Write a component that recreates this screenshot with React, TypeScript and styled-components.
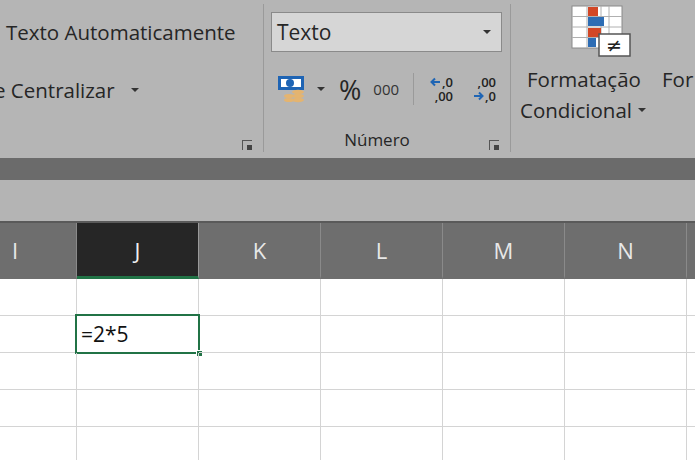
import styled, { createGlobalStyle } from "styled-components";

const Global = createGlobalStyle`
  body { margin: 0; background: #fff; overflow: hidden; }
  * { box-sizing: border-box; }
`;

const cols = ["I", "J", "K", "L", "M", "N", ""];
const widths = [77, 122, 122, 122, 122, 122, 122];

function BlueArrow({ dir }: { dir: "left" | "right" }) {
  return (
    <svg width="11" height="10" viewBox="0 0 11 10">
      {dir === "left" ? (
        <path d="M10 5H2M5 1.5L1.5 5L5 8.5" stroke="#1f65b4" strokeWidth="2" fill="none" />
      ) : (
        <path d="M1 5H9M6 1.5L9.5 5L6 8.5" stroke="#1f65b4" strokeWidth="2" fill="none" />
      )}
    </svg>
  );
}

export default function App() {
  return (
    <Page>
      <Global />
      <Ribbon>
        <AlignGroup>
          <RibbonText style={{ marginTop: 18 }}>Texto Automaticamente</RibbonText>
          <RibbonText style={{ marginTop: 30, marginLeft: -12 }}>
            e Centralizar <Caret style={{ marginLeft: 10 }} />
          </RibbonText>
          <Launcher style={{ left: 242 }} />
        </AlignGroup>
        <Sep />
        <NumberGroup>
          <Dropdown>
            Texto
            <Caret />
          </Dropdown>
          <IconRow>
            <IconBox>
              <svg width="30" height="30" viewBox="0 0 30 30">
                <rect x="1" y="2" width="26" height="14" fill="#1e64b4" />
                <rect x="4" y="5" width="20" height="8" fill="#fff" />
                <circle cx="13" cy="9" r="4" fill="#1e64b4" />
                <ellipse cx="21" cy="18" rx="6" ry="2.2" fill="#e4b470" />
                <ellipse cx="21" cy="22" rx="6" ry="2.2" fill="#e4b470" />
                <ellipse cx="21" cy="26" rx="6" ry="2.2" fill="#e4b470" />
                <ellipse cx="12" cy="22" rx="5" ry="2" fill="#e4b470" />
                <ellipse cx="12" cy="26" rx="5" ry="2" fill="#e4b470" />
              </svg>
            </IconBox>
            <Caret style={{ marginLeft: 10 }} />
            <Percent>%</Percent>
            <Thousands>000</Thousands>
            <VSep />
            <DecIcon>
              <span><BlueArrow dir="left" />,0</span>
              <span>,00</span>
            </DecIcon>
            <DecIcon>
              <span>,00</span>
              <span><BlueArrow dir="right" />,0</span>
            </DecIcon>
          </IconRow>
          <GroupLabel>Número</GroupLabel>
          <Launcher style={{ left: 225 }} />
        </NumberGroup>
        <Sep />
        <StyleGroup>
          <CondIcon>
            <svg width="62" height="56" viewBox="0 0 62 56">
              <rect x="1" y="1" width="50" height="42" fill="#fff" stroke="#8a8a8a" />
              {[11.5, 22, 32.5].map((y) => (
                <line key={y} x1="1" x2="51" y1={y} y2={y} stroke="#b0b0b0" />
              ))}
              {[16, 30, 38].map((x) => (
                <line key={x} x1={x} x2={x} y1="1" y2="43" stroke="#b0b0b0" />
              ))}
              <rect x="17" y="2" width="10" height="9" fill="#d24726" />
              <rect x="17" y="12" width="16" height="9" fill="#2e6db4" />
              <rect x="17" y="23" width="13" height="9" fill="#d24726" />
              <rect x="17" y="33" width="8" height="9" fill="#2e6db4" />
              <rect x="28" y="29" width="31" height="22" fill="#fff" stroke="#555" strokeWidth="1.5" />
              <text x="43" y="47" fontSize="19" textAnchor="middle" fontFamily="DejaVu Sans" fill="#222">≠</text>
            </svg>
          </CondIcon>
          <RibbonText style={{ marginTop: 4, marginLeft: 7 }}>Formatação</RibbonText>
          <RibbonText style={{ marginTop: 3 }}>
            Condicional <Caret style={{ marginLeft: 0 }} />
          </RibbonText>
          <CutText>For</CutText>
        </StyleGroup>
      </Ribbon>
      <DarkBar />
      <FormulaBar />
      <HeaderRow>
        {cols.map((c, i) => (
          <ColHead key={i} $w={widths[i]} $active={c === "J"}>
            {c}
          </ColHead>
        ))}
      </HeaderRow>
      {[0, 1, 2, 3, 4].map((r) => (
        <Row key={r}>
          {cols.map((c, i) => (
            <Cell key={i} $w={widths[i]}>
              {r === 1 && c === "J" && (
                <Selected>
                  =2*5
                  <Handle />
                </Selected>
              )}
            </Cell>
          ))}
        </Row>
      ))}
    </Page>
  );
}

const Page = styled.div`
  width: 695px;
  height: 460px;
  overflow: hidden;
  font-family: "Open Sans", "Liberation Sans", sans-serif;
  color: #262626;
`;

const Ribbon = styled.div`
  height: 158px;
  background: #b5b5b5;
  display: flex;
`;

const AlignGroup = styled.div`
  position: relative;
  flex: none;
  width: 263px;
  padding-left: 6px;
  display: flex;
  flex-direction: column;
`;

const RibbonText = styled.div`
  font-size: 20.5px;
  line-height: 28px;
  white-space: nowrap;
  display: flex;
  align-items: center;
  gap: 6px;
`;

const Caret = styled.span`
  display: inline-block;
  width: 0;
  height: 0;
  border-left: 4px solid transparent;
  border-right: 4px solid transparent;
  border-top: 4px solid #333;
  margin-left: 8px;
`;

const Launcher = styled.div`
  position: absolute;
  top: 140px;
  width: 10px;
  height: 10px;
  border-left: 1px solid #555;
  border-top: 1px solid #555;
  &::after {
    content: "";
    position: absolute;
    right: 0;
    bottom: 0;
    width: 5px;
    height: 5px;
    background: #444;
  }
`;

const Sep = styled.div`
  flex: none;
  width: 1px;
  margin: 4px 0 6px;
  background: #9a9a9a;
`;

const NumberGroup = styled.div`
  position: relative;
  flex: none;
  width: 246px;
  padding: 12px 0 0 7px;
  display: flex;
  flex-direction: column;
`;

const Dropdown = styled.div`
  width: 231px;
  height: 40px;
  border: 1px solid #8a8a8a;
  background: #d6d6d6;
  font-size: 21px;
  padding: 0 10px 0 5px;
  display: flex;
  align-items: center;
  justify-content: space-between;
`;

const IconRow = styled.div`
  display: flex;
  align-items: center;
  height: 50px;
  margin-top: 12px;
  padding-left: 6px;
`;

const IconBox = styled.div`
  flex: none;
  width: 30px;
  height: 30px;
`;

const Percent = styled.span`
  font-size: 27px;
  margin-left: 14px;
`;

const Thousands = styled.span`
  font-size: 15px;
  margin-left: 12px;
  color: #333;
`;

const VSep = styled.div`
  flex: none;
  width: 1px;
  height: 32px;
  background: #9a9a9a;
  margin: 0 16px 0 14px;
`;

const DecIcon = styled.div`
  display: flex;
  flex-direction: column;
  font-size: 13px;
  line-height: 14px;
  font-weight: 600;
  margin-right: 20px;
  color: #222;
  align-items: flex-end;
  span {
    display: flex;
    align-items: center;
    gap: 1px;
  }
`;

const GroupLabel = styled.div`
  font-size: 17px;
  text-align: center;
  width: 212px;
  margin-top: 14px;
`;

const StyleGroup = styled.div`
  position: relative;
  flex: 1;
  padding-left: 9px;
  display: flex;
  flex-direction: column;
`;

const CondIcon = styled.div`
  margin: 5px 0 0 51px;
  height: 56px;
`;

const CutText = styled.div`
  position: absolute;
  left: 151px;
  top: 65px;
  font-size: 20.5px;
`;

const DarkBar = styled.div`
  height: 22px;
  background: #6b6b6b;
`;

const FormulaBar = styled.div`
  height: 43px;
  background: #b4b4b4;
  border-bottom: 2px solid #5a5a5a;
`;

const HeaderRow = styled.div`
  display: flex;
  height: 56px;
  background: #6e6e6e;
`;

const ColHead = styled.div<{ $w: number; $active?: boolean }>`
  flex: none;
  width: ${(p) => p.$w}px;
  border-right: 1px solid ${(p) => (p.$active ? "#9a9a9a" : "#8a8a8a")};
  display: flex;
  align-items: center;
  justify-content: center;
  font-size: 22px;
  color: ${(p) => (p.$active ? "#f0f0f0" : "#e8e8e8")};
  background: ${(p) => (p.$active ? "#262626" : "transparent")};
  border-bottom: 3px solid ${(p) => (p.$active ? "#217346" : "transparent")};
  &:first-child {
    justify-content: flex-start;
    padding-left: 12px;
  }
`;

const Row = styled.div`
  display: flex;
  height: 37px;
`;

const Cell = styled.div<{ $w: number }>`
  flex: none;
  position: relative;
  width: ${(p) => p.$w}px;
  border-right: 1px solid #d4d4d4;
  border-bottom: 1px solid #d4d4d4;
`;

const Selected = styled.div`
  position: absolute;
  left: -2px;
  top: -2px;
  right: -2px;
  bottom: -2px;
  border: 2px solid #217346;
  font-size: 21px;
  color: #111;
  padding-left: 4px;
  display: flex;
  align-items: center;
`;

const Handle = styled.div`
  position: absolute;
  right: -5px;
  bottom: -5px;
  width: 7px;
  height: 7px;
  background: #217346;
  border: 1px solid #fff;
`;
